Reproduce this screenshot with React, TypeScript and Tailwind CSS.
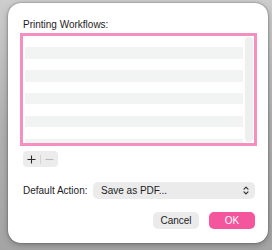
import React from "react";

const font = { fontFamily: '"Liberation Sans", Arial, sans-serif' };

export default function App() {
  const rows = Array.from({ length: 10 }, (_, i) => i);
  return (
    <div
      className="w-[272px] h-[250px] overflow-hidden bg-linear-to-b from-[#cdcdcd] via-[#b0b0b0] to-[#a4a4a4] pl-[8px] pt-[3px]"
      style={font}
    >
      <div className="w-[260px] h-[240px] bg-white rounded-[13px] shadow-[0_0_2px_rgba(0,0,0,0.45),0_2px_6px_rgba(0,0,0,0.25)] flex flex-col pl-[12px] pr-[11px]">
        <div className="mt-[16px] h-[12px] leading-[12px] pl-[3px] text-[10px] text-[#1c1c1c]">
          Printing Workflows:
        </div>
        <div className="mt-[2px] h-[113px] border-[3px] border-[#f48fc0] flex overflow-hidden">
          <div className="flex-1 ml-[2px] mr-[2px] flex flex-col overflow-hidden">
            {rows.map((i) => (
              <div
                key={i}
                className={
                  "h-[11.4px] shrink-0 " + (i % 2 === 1 ? "bg-[#f2f3f3]" : "bg-white")
                }
              />
            ))}
          </div>
          <div className="w-[8px] mr-[1px] my-[1px] rounded-full bg-[#efefef]" />
        </div>
        <div className="mt-[5px] ml-[3px] w-[35px] h-[16px] rounded-[4px] bg-[#ececec] flex items-center">
          <div className="w-[17px] flex justify-center">
            <svg width="9" height="9" viewBox="0 0 9 9">
              <path d="M4.5 0.5V8.5M0.5 4.5H8.5" stroke="#2a2a2a" strokeWidth="1.1" />
            </svg>
          </div>
          <div className="w-[1px] h-[9px] bg-[#d4d4d4]" />
          <div className="w-[17px] flex justify-center">
            <svg width="9" height="9" viewBox="0 0 9 9">
              <path d="M0.5 4.5H8.5" stroke="#b8b8b8" strokeWidth="1.1" />
            </svg>
          </div>
        </div>
        <div className="mt-[15px] flex items-center pr-[2px]">
          <div className="pl-[3px] w-[73px] text-[10px] text-[#1c1c1c]">Default Action:</div>
          <div className="flex-1 h-[17px] rounded-[5px] bg-[#ebebeb] flex items-center pl-[8px] pr-[6px]">
            <span className="flex-1 text-[10px] text-[#1c1c1c]">Save as PDF...</span>
            <svg width="6" height="9" viewBox="0 0 6 9">
              <path d="M1 3.2L3 1.2L5 3.2M1 5.8L3 7.8L5 5.8" stroke="#333" strokeWidth="1.2" fill="none" strokeLinecap="round" strokeLinejoin="round" />
            </svg>
          </div>
        </div>
        <div className="mt-[13px] flex justify-end gap-[10px] pr-[2px]">
          <div className="w-[46px] h-[17px] rounded-[5px] bg-[#ebebeb] flex items-center justify-center text-[10px] text-[#1c1c1c]">
            Cancel
          </div>
          <div className="w-[46px] h-[17px] rounded-[5px] bg-[#f5559c] flex items-center justify-center text-[10px] text-white font-medium">
            OK
          </div>
        </div>
      </div>
    </div>
  );
}
